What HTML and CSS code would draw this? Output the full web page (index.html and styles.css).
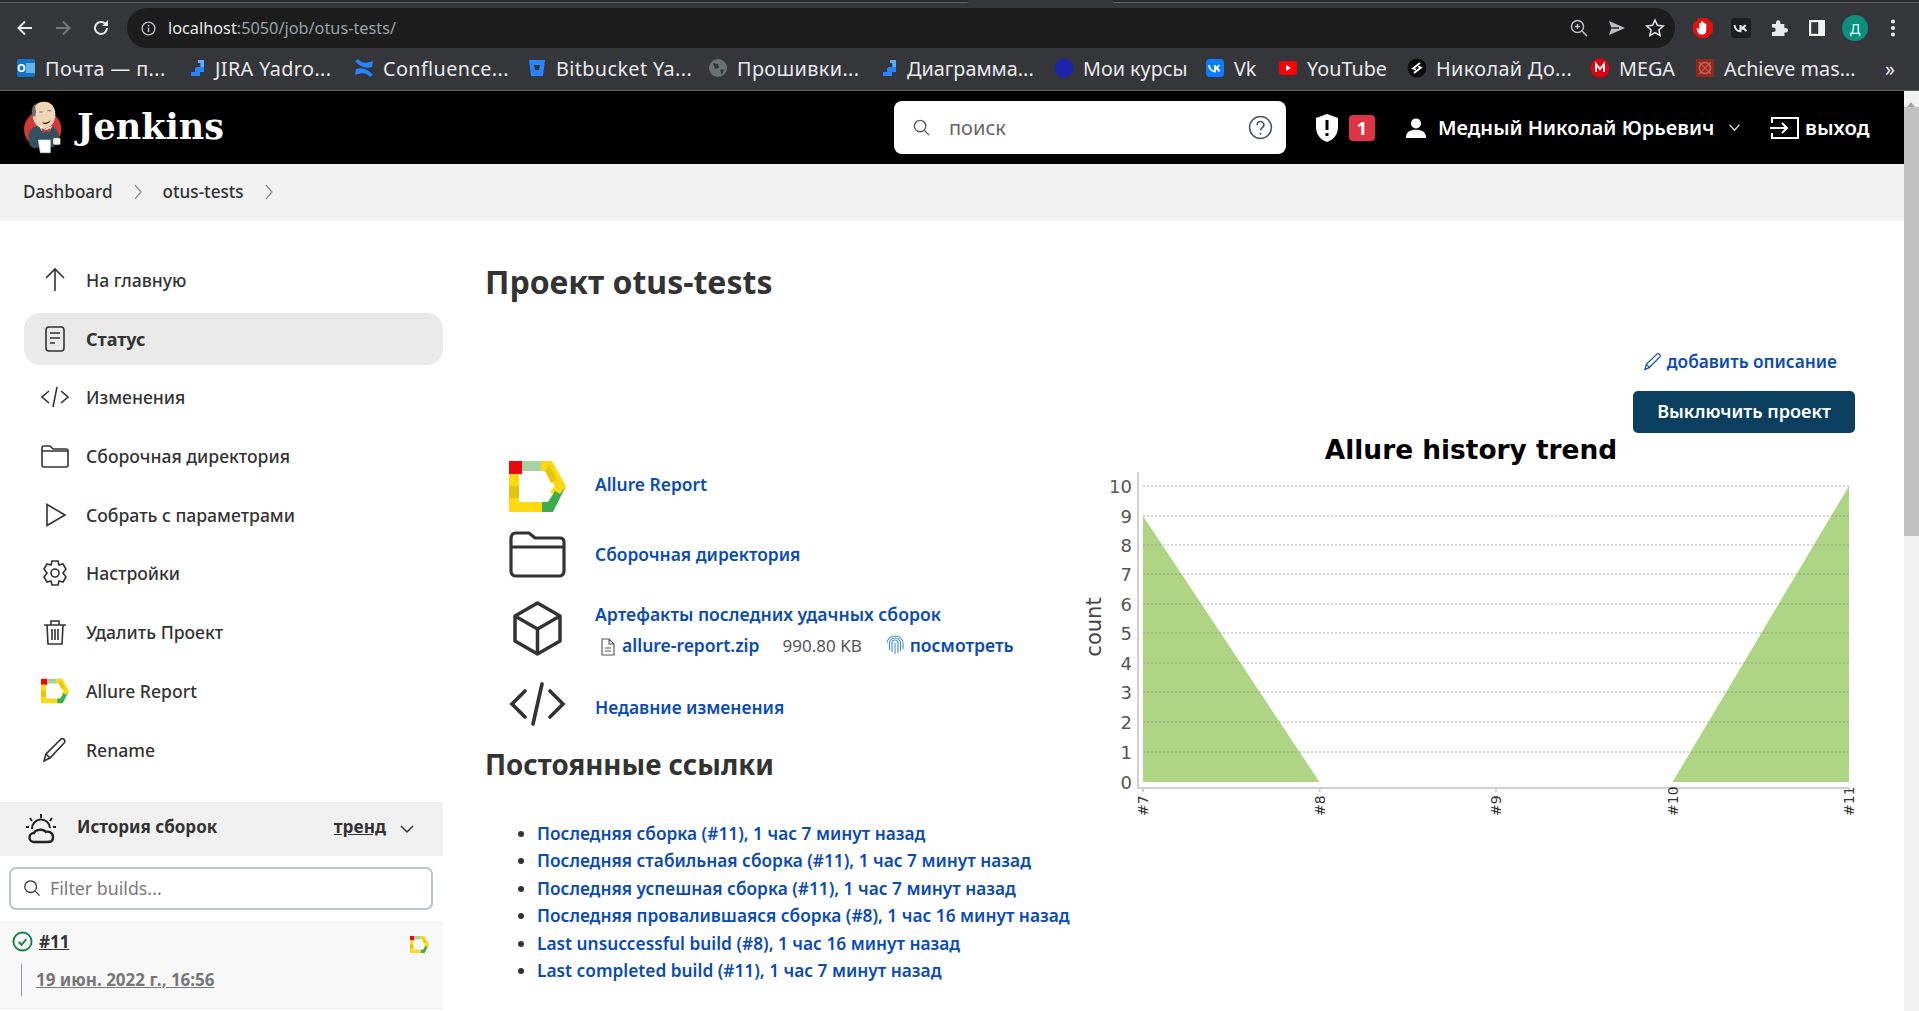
FILE: index.html
```html
<!DOCTYPE html>
<html lang="ru">
<head>
    <meta charset="UTF-8">
    <title>otus-tests [Jenkins]</title>
    <link rel="stylesheet" href="styles.css">
</head>
<body>
    <div class="tabstrip">
        <div class="tab-left"></div>
        <div class="tab-right"></div>
    </div>
    <div class="toolbar">
        <svg class="tb-icon nav-back" viewBox="0 0 20 20"><path d="M17 10H4M10 3.500 3.500 10l6.500 6.500" fill="none" stroke="#e8eaed" stroke-width="2"/></svg>
        <svg class="tb-icon nav-fwd" viewBox="0 0 20 20"><path d="M3 10h13M10 3.500l6.500 6.500-6.500 6.500" fill="none" stroke="#75777a" stroke-width="2"/></svg>
        <svg class="tb-icon nav-reload" viewBox="0 0 20 20"><path d="M16 10a6 6 0 1 1-1.800-4.300" fill="none" stroke="#e8eaed" stroke-width="2"/><path d="M17 2v6h-6z" fill="#e8eaed"/></svg>
        <div class="omnibox">
            <svg class="omni-info" viewBox="0 0 20 20"><circle cx="10" cy="10" r="7.500" fill="none" stroke="#bdc1c6" stroke-width="1.600"/><path d="M10 9v5M10 6v1.600" stroke="#bdc1c6" stroke-width="1.800"/></svg>
            <span class="url"><b>localhost</b>:5050/job/otus-tests/</span>
            <div class="omni-right">
                <svg class="tb-icon" viewBox="0 0 20 20"><circle cx="8.500" cy="8.500" r="6" fill="none" stroke="#bdc1c6" stroke-width="1.500"/><path d="M13 13l5 5M8.500 6v5M6 8.500h5" stroke="#bdc1c6" stroke-width="1.500"/></svg>
                <svg class="tb-icon" viewBox="0 0 20 20"><path d="M2 3l16 7-16 7 2.500-7z" fill="#bdc1c6"/><path d="M4.500 10H12" stroke="#1c1c1d" stroke-width="1.400"/></svg>
                <svg class="tb-icon" viewBox="0 0 20 20"><path d="M10 2l2.400 5.300 5.800.7-4.300 3.900 1.200 5.700L10 14.700l-5.100 2.900 1.200-5.700L1.800 8l5.800-.7z" fill="none" stroke="#e8eaed" stroke-width="1.500"/></svg>
            </div>
        </div>
        <div class="ext-icons">
            <svg class="tb-icon" viewBox="0 0 20 20"><path d="M6 0h8l6 6v8l-6 6H6l-6-6V6z" fill="#e60d0d"/><path d="M8 16.500c-1.500 0-2.500-1-3.300-2.800L3.500 10.500c.6-.6 1.500-.3 2 .5l.8 1.200V5.500a.9.9 0 0 1 1.700 0V4a.9.9 0 0 1 1.800 0v.8a.9.9 0 0 1 1.700 0v1.500a.9.9 0 0 1 1.800 0V12c0 3-1.500 4.500-3.800 4.500z" fill="#fff"/></svg>
            <svg class="tb-icon" viewBox="0 0 20 20"><rect width="20" height="20" rx="3" fill="#1d1e22"/><path d="M3.500 7c.5 4 2.500 6.200 6 6.200V7M9.500 10c2.500 0 4-1.200 5-3M9.500 10c2.500 0 4.500 1 6 3.200" fill="none" stroke="#e8eaed" stroke-width="2"/></svg>
            <svg class="tb-icon" viewBox="0 0 20 20"><path d="M3 6h4V4.500a2.200 2.200 0 0 1 4.400 0V6h4v4h1.400a2.200 2.200 0 0 1 0 4.400h-1.400V18H3v-4h1.500a2.200 2.200 0 0 0 0-4.400H3z" fill="#e8eaed"/></svg>
            <svg class="tb-icon" viewBox="0 0 20 20"><path d="M2 2h16v16H2z" fill="#f1f1f1"/><path d="M4.200 4.200h7v11.600h-7z" fill="#35363a"/></svg>
            <span class="avatar">Д</span>
            <svg class="tb-icon" viewBox="0 0 20 20"><circle cx="10" cy="3.500" r="2" fill="#e8eaed"/><circle cx="10" cy="10" r="2" fill="#e8eaed"/><circle cx="10" cy="16.500" r="2" fill="#e8eaed"/></svg>
        </div>
    </div>
    <div class="bookmarks">
        <span class="bm bm-cut"><svg viewBox="0 0 20 20"><rect x="1" y="1" width="18" height="18" rx="2" fill="#1173c9"/><rect x="10" y="5" width="9" height="10" fill="#5fb4ee"/><text x="5.500" y="14" class="bm-o">O</text></svg>Почта — п...</span>
        <span class="bm bm-cut"><svg viewBox="0 0 20 20"><path d="M9 10h5V5h4v9h-9zM5 14h5V9h4v9H5z" fill="#2684ff"/><path d="M12 2h6v7h-3V5h-3z" fill="#67a9ff"/></svg>JIRA Yadro...</span>
        <span class="bm bm-cut"><svg viewBox="0 0 20 20"><path d="M1 3l3-2c3 4 7 5 15 2l-1 6c-6 2-12 0-17-6zM19 17l-3 2c-3-4-7-5-15-2l1-6c6-2 12 0 17 6z" fill="#2684ff"/></svg>Confluence...</span>
        <span class="bm bm-cut"><svg viewBox="0 0 20 20"><path d="M2 2h16l-2 16H4z" fill="#2684ff"/><path d="M7 7h6l-1 5H8z" fill="#35363a"/></svg>Bitbucket Ya...</span>
        <span class="bm bm-cut"><svg viewBox="0 0 20 20"><circle cx="10" cy="10" r="9" fill="#6b7074"/><path d="M5 5l5 1 1 4-4 1zM12 12l4-1-2 6z" fill="#35363a"/></svg>Прошивки...</span>
        <span class="bm"><svg viewBox="0 0 20 20"><path d="M9 10h5V5h4v9h-9zM5 14h5V9h4v9H5z" fill="#2684ff"/><path d="M12 2h6v7h-3V5h-3z" fill="#67a9ff"/></svg>Диаграмма...</span>
        <span class="bm"><svg viewBox="0 0 20 20"><circle cx="10" cy="10" r="9.500" fill="#1d24ac"/></svg>Мои курсы</span>
        <span class="bm"><svg viewBox="0 0 20 20"><rect x="1" y="1" width="18" height="18" rx="4" fill="#0a7cff"/><path d="M4 7c.5 4 2.500 6.500 6 6.500V7M10 10c2 0 3.500-1.500 4-3M10 10c2 0 3.500 1.500 4.500 3.500" fill="none" stroke="#fff" stroke-width="1.800"/></svg>Vk</span>
        <span class="bm"><svg viewBox="0 0 20 20"><rect x="1" y="3" width="18" height="14" rx="4" fill="#f00"/><path d="M8 7l5 3-5 3z" fill="#fff"/></svg>YouTube</span>
        <span class="bm bm-cut"><svg viewBox="0 0 20 20"><circle cx="10" cy="10" r="9.500" fill="#0b0b0b"/><path d="M13 5 6 10.500l3 1M7 15l7-5.500-3-1" fill="none" stroke="#fff" stroke-width="1.800"/></svg>Николай До...</span>
        <span class="bm"><svg viewBox="0 0 20 20"><circle cx="10" cy="10" r="9.500" fill="#e3000f"/><path d="M6 14V6l4 5 4-5v8" fill="none" stroke="#fff" stroke-width="1.900"/></svg>MEGA</span>
        <span class="bm"><svg viewBox="0 0 20 20"><rect x="1" y="1" width="18" height="18" fill="#8c2a22"/><circle cx="10" cy="10" r="5.500" fill="none" stroke="#d1584b" stroke-width="1.800"/><path d="M4 4l12 12M16 4 4 16" stroke="#d1584b" stroke-width="1.200"/></svg>Achieve mas...</span>
        <span class="bm bm-more">»</span>
    </div>

    <div class="window">
        <div class="page">
            <header class="jk-header">
                <svg class="jk-logo" viewBox="60 30 135 165">
                    <circle cx="128" cy="118" r="56" fill="#d33833"/>
                    <path d="M85 140c0-18 12-30 30-32h35c18 4 28 20 28 42l-18 22-60 2c-10-4-15-16-15-34z" fill="#335061"/>
                    <path d="M98 72c0-24 14-37 34-37s34 14 34 38c0 26-14 42-34 42-18 0-34-16-34-43z" fill="#f0d6b7"/>
                    <path d="M96 78c-2-16 0-30 12-38-3 10-3 14 0 24l-2 16z" fill="#6d6b6d"/>
                    <path d="M118 66h10M142 62h12" stroke="#49728b" stroke-width="3"/>
                    <path d="M126 96c8 4 18 2 26-6-2 12-20 18-26 6z" fill="#4a2a22"/>
                    <path d="M118 108l18 8 20-8-6 14h-26z" fill="#fff"/>
                    <path d="M124 114l14 6 14-6-2 14-12-4-12 4z" fill="#d33833"/>
                    <path d="M115 150h36v38h-30z" fill="#fff" stroke="#d9d9d9" stroke-width="2"/>
                    <rect x="158" y="143" width="24" height="22" rx="6" fill="#f5f0e8" stroke="#333" stroke-width="2"/>
                </svg>
                <span class="jk-name">Jenkins</span>
                <div class="jk-search">
                    <svg class="jk-search-icon" viewBox="0 0 20 20"><circle cx="8.500" cy="8.500" r="6" fill="none" stroke="#555" stroke-width="1.400"/><path d="M13 13l5 5" stroke="#555" stroke-width="1.400"/></svg>
                    <span class="jk-search-text">поиск</span>
                    <svg class="jk-help" viewBox="0 0 24 24"><circle cx="12" cy="12" r="10.500" fill="none" stroke="#4a5568" stroke-width="1.500"/><path d="M8.800 9.500A3.200 3.200 0 1 1 13.500 12.300c-1 .6-1.500 1.200-1.500 2.400" fill="none" stroke="#4a5568" stroke-width="1.500"/><circle cx="12" cy="18" r="1" fill="#4a5568"/></svg>
                </div>
                <svg class="jk-shield" viewBox="0 0 24 30"><path d="M12 1l11 4v9c0 8-5 13-11 15C6 27 1 22 1 14V5z" fill="#fff"/><path d="M12 7v10M12 20v3" stroke="#000" stroke-width="3"/></svg>
                <span class="jk-badge">1</span>
                <svg class="jk-user" viewBox="0 0 24 24"><circle cx="12" cy="7" r="5.500" fill="#fff"/><path d="M1 23c0-7 5-9 11-9s11 2 11 9z" fill="#fff"/></svg>
                <span class="jk-username">Медный Николай Юрьевич</span>
                <svg class="jk-caret" viewBox="0 0 14 10"><path d="M1.500 2l5.500 6 5.500-6" fill="none" stroke="#ddd" stroke-width="1.500"/></svg>
                <svg class="jk-logout" viewBox="0 0 30 24"><path d="M3 7V2h26v20H3v-5" fill="none" stroke="#fff" stroke-width="2"/><path d="M1 12h17M13 7l5 5-5 5" fill="none" stroke="#fff" stroke-width="2"/></svg>
                <span class="jk-logout-text">выход</span>
            </header>
            <nav class="crumbs">
                <span class="crumb">Dashboard</span>
                <svg class="crumb-sep" viewBox="0 0 10 18"><path d="M2 2l6 7-6 7" fill="none" stroke="#888" stroke-width="1.200"/></svg>
                <span class="crumb">otus-tests</span>
                <svg class="crumb-sep" viewBox="0 0 10 18"><path d="M2 2l6 7-6 7" fill="none" stroke="#888" stroke-width="1.200"/></svg>
            </nav>

            <div class="layout">
                <aside class="sidebar">
                    <ul class="tasks">
                        <li class="task"><svg viewBox="0 0 28 28"><path d="M14 25V4M5 12l9-9 9 9" class="line"/></svg>На главную</li>
                        <li class="task task-active"><svg viewBox="0 0 28 28"><rect x="5" y="2" width="18" height="24" rx="3" class="line"/><path d="M9 8h10M9 13h10M9 18h5" class="line"/></svg>Статус</li>
                        <li class="task"><svg viewBox="0 0 28 28"><path d="M8 8l-7 6 7 6M20 8l7 6-7 6M16 4l-4 20" class="line"/></svg>Изменения</li>
                        <li class="task"><svg viewBox="0 0 28 28"><path d="M1 6c0-1 .5-2 2-2h6l3 3h13c1.500 0 2 1 2 2v14c0 1-.5 2-2 2H3c-1.500 0-2-1-2-2zM1 9h26" class="line"/></svg>Сборочная директория</li>
                        <li class="task"><svg viewBox="0 0 28 28"><path d="M6 3.500v21L24 14z" class="line"/></svg>Собрать с параметрами</li>
                        <li class="task"><svg viewBox="0 0 28 28"><path d="M11 2h6l1 4 4-1 3 5-3 4 3 4-3 5-4-1-1 4h-6l-1-4-4 1-3-5 3-4-3-4 3-5 4 1z" class="line"/><circle cx="14" cy="14" r="4" class="line"/></svg>Настройки</li>
                        <li class="task"><svg viewBox="0 0 28 28"><path d="M3 7h22M10 7V3h8v4M6 7l1 19h14l1-19M11 11v11M14 11v11M17 11v11" class="line"/></svg>Удалить Проект</li>
                        <li class="task"><svg class="allure-mark" viewBox="0 0 57 51"><use href="#allure"/></svg>Allure Report</li>
                        <li class="task"><svg viewBox="0 0 28 28"><path d="M3 25l2-7L20 3c2-1.500 5 1.500 3.500 3.500L9 22zM5 18l4 4" class="line"/></svg>Rename</li>
                    </ul>
                    <div class="history">
                        <div class="history-head">
                            <svg class="history-icon" viewBox="0 0 32 32"><path d="M7 16a9 9 0 0 1 18-1" fill="none" stroke="#222" stroke-width="2"/><path d="M9 29a4.500 4.500 0 0 1 0-9c1-3 9-5 12-1 2-1 7 0 7 5s-3 5-6 5z" fill="#f1f1f1" stroke="#222" stroke-width="2.400"/><path d="M16 1v4M5 5l2 3M27 5l-2 3M1 14h3M28 14h3" stroke="#222" stroke-width="2"/></svg>
                            <span class="history-title">История сборок</span>
                            <span class="history-trend">тренд</span>
                            <svg class="history-caret" viewBox="0 0 14 10"><path d="M1 2l6 6 6-6" fill="none" stroke="#333" stroke-width="1.500"/></svg>
                        </div>
                        <div class="filter-wrap">
                            <div class="filter">
                                <svg viewBox="0 0 20 20"><circle cx="8.500" cy="8.500" r="6.500" fill="none" stroke="#333" stroke-width="1.400"/><path d="M13.500 13.500l5 5" stroke="#333" stroke-width="1.400"/></svg>
                                <span>Filter builds...</span>
                            </div>
                        </div>
                        <div class="build">
                            <div class="build-top">
                                <svg class="build-ok" viewBox="0 0 22 22"><circle cx="11" cy="11" r="9.500" fill="none" stroke="#138347" stroke-width="2"/><path d="M7 11.500l3 3 5-6" fill="none" stroke="#138347" stroke-width="2"/></svg>
                                <a class="build-num">#11</a>
                                <svg class="build-allure" viewBox="0 0 57 51"><use href="#allure"/></svg>
                            </div>
                            <div class="build-date"><a>19 июн. 2022 г., 16:56</a></div>
                        </div>
                    </div>
                </aside>

                <main class="content">
                    <h1 class="job-title">Проект otus-tests</h1>
                    <div class="desc-row">
                        <svg viewBox="0 0 20 20"><path d="M2 18.500l1.500-5.500L15 2c1.500-1 4 1 3 3L6.500 16.500zM3.500 13l3.500 3.500" fill="none" stroke="#0b4bb5" stroke-width="1.300"/></svg>
                        <a class="link">добавить описание</a>
                    </div>
                    <div class="btn-row"><span class="btn-disable">Выключить проект</span></div>
                    <div class="job-body">
                        <div class="job-left">
                            <div class="job-link job-link-allure">
                                <svg class="job-icon" viewBox="0 0 57 51"><use href="#allure"/></svg>
                                <a class="link allure-text">Allure Report</a>
                            </div>
                            <div class="job-link job-link-ws">
                                <svg class="job-icon" viewBox="0 0 57 47"><path d="M2 8c0-4 2-6 5-6h13l6 5h25c3 0 4 2 4 4v29c0 3-2 5-5 5H7c-3 0-5-2-5-5zM2 16h53" fill="none" stroke="#333" stroke-width="3.200"/></svg>
                                <a class="link job-text">Сборочная директория</a>
                            </div>
                            <div class="job-link job-link-art">
                                <svg class="job-icon" viewBox="0 0 57 55"><path d="M28.500 2 51 15v25L28.500 53 6 40V15zM6 15l22.500 13L51 15M28.500 28v25" fill="none" stroke="#333" stroke-width="3.500" stroke-linejoin="round"/></svg>
                                <div class="art-text">
                                    <a class="link">Артефакты последних удачных сборок</a>
                                    <div class="art-file">
                                        <svg class="art-doc" viewBox="0 0 16 20"><path d="M2 2h7l5 5v11H2zM9 2v5h5M5 11h6M5 14h6" fill="none" stroke="#555" stroke-width="1.100"/></svg>
                                        <a class="link art-name">allure-report.zip</a>
                                        <span class="art-size">990.80 KB</span>
                                        <svg class="art-print" viewBox="0 0 18 20"><g fill="none" stroke="#3f8fd2" stroke-width="1.100"><path d="M1 8a8 7 0 0 1 16 0v6"/><path d="M3.500 15V8a5.500 5 0 0 1 11 0v8"/><path d="M6 17V8a3 3 0 0 1 6 0v10"/><path d="M9 8v11"/></g></svg>
                                        <a class="link art-view">посмотреть</a>
                                    </div>
                                </div>
                            </div>
                            <div class="job-link job-link-changes">
                                <svg class="job-icon" viewBox="0 0 57 44"><path d="M16 9 3 22l13 13M41 9l13 13-13 13M33 2l-9 40" fill="none" stroke="#333" stroke-width="3.600" stroke-linecap="round"/></svg>
                                <a class="link job-text changes-text">Недавние изменения</a>
                            </div>
                            <h2 class="perma-title">Постоянные ссылки</h2>
                            <ul class="perma">
                                <li><a class="link">Последняя сборка (#11), 1 час 7 минут назад</a></li>
                                <li><a class="link">Последняя стабильная сборка (#11), 1 час 7 минут назад</a></li>
                                <li><a class="link">Последняя успешная сборка (#11), 1 час 7 минут назад</a></li>
                                <li><a class="link">Последняя провалившаяся сборка (#8), 1 час 16 минут назад</a></li>
                                <li><a class="link">Last unsuccessful build (#8), 1 час 16 минут назад</a></li>
                                <li><a class="link">Last completed build (#11), 1 час 7 минут назад</a></li>
                            </ul>
                        </div>
                        <svg class="trend" viewBox="0 -6 800 426" width="800" height="426">
                            <text x="397" y="23" class="trend-title">Allure history trend</text>
                            <path d="M69 80 245.500 346H69z" class="trend-area"/>
                            <path d="M775 50 598.500 346H775z" class="trend-area"/>
                            <g class="trend-grid">
                                <path d="M69 50H775M69 80H775M69 109H775M69 138H775M69 168H775M69 197H775M69 227H775M69 256H775M69 286H775M69 316H775"/>
                            </g>
                            <path d="M64 36V352H775M69 352v4M245.500 352v4M422 352v4M598.500 352v4M775 352v4" class="trend-axis"/>
                            <g class="trend-y">
                                <text x="58" y="57">10</text><text x="58" y="87">9</text><text x="58" y="116">8</text><text x="58" y="145">7</text><text x="58" y="175">6</text><text x="58" y="204">5</text><text x="58" y="234">4</text><text x="58" y="263">3</text><text x="58" y="293">2</text><text x="58" y="323">1</text><text x="58" y="353">0</text>
                            </g>
                            <text class="trend-count" transform="translate(27 191) rotate(-90)">count</text>
                            <g class="trend-x">
                                <text transform="translate(74 380) rotate(-90)">#7</text>
                                <text transform="translate(251 380) rotate(-90)">#8</text>
                                <text transform="translate(427 380) rotate(-90)">#9</text>
                                <text transform="translate(604 380) rotate(-90)">#10</text>
                                <text transform="translate(780 380) rotate(-90)">#11</text>
                            </g>
                        </svg>
                    </div>
                </main>
            </div>
        </div>
        <div class="scrollbar">
            <div class="scroll-arrow"></div>
            <div class="scroll-thumb"></div>
        </div>
    </div>

    <svg class="defs" width="0" height="0">
        <symbol id="allure" viewBox="0 0 57 51">
            <path d="M0 0h13v13H0z" fill="#e8090f"/>
            <path d="M13 0h19v10H13z" fill="#a8d2a0"/>
            <path d="M32 0h11l14 25-6 11-10-5 5-6-10-15H32z" fill="#ffd90f"/>
            <path d="M40 3l8 15-6 4-6-12z" fill="#e6c60f"/>
            <path d="M0 13h10v38H0z" fill="#ffd90f"/>
            <path d="M0 25h10v12H0z" fill="#e3c50f"/>
            <path d="M10 41h23v10H10z" fill="#ffd90f"/>
            <path d="M33 41h6l7-11 5 3 6-8-13 26H33z" fill="#3cad4a"/>
        </symbol>
    </svg>
</body>
</html>
```

FILE: styles.css
```css
* {
    box-sizing: border-box;
}
html, body {
    height: 100%;
}
body {
    margin: 0;
    overflow: hidden;
    background: #fff;
    font-family: "Noto Sans", Arial, sans-serif;
    font-size: 17.600px;
    color: #333;
    display: flex;
    flex-direction: column;
}
ul {
    list-style: none;
    margin: 0;
    padding: 0;
}
.defs {
    display: none;
}

/* browser chrome */
.tabstrip {
    height: 3px;
    background: #35363a;
    display: flex;
    justify-content: space-between;
    flex: none;
}
.tab-left,
.tab-right {
    height: 3px;
    background: #28292b;
    border-bottom: 1px solid #5f6063;
}
.tab-left {
    width: 969px;
    border-bottom-right-radius: 3px;
}
.tab-right {
    width: 807px;
    border-bottom-left-radius: 3px;
}
.toolbar {
    height: 45px;
    padding-top: 5px;
    background: #35363a;
    display: flex;
    align-items: center;
    flex: none;
}
.tb-icon {
    width: 20px;
    height: 20px;
    flex: none;
}
.nav-back {
    margin-left: 15px;
}
.nav-fwd,
.nav-reload {
    margin-left: 18px;
}
.omnibox {
    margin-left: 16px;
    width: 1548px;
    height: 40px;
    border-radius: 20px;
    background: #1c1c1d;
    display: flex;
    align-items: center;
    padding-left: 13px;
    padding-right: 10px;
}
.omni-info {
    width: 17px;
    height: 17px;
}
.url {
    margin-left: 11px;
    font-size: 16.300px;
    color: #9aa0a6;
}
.url b {
    font-weight: 400;
    color: #e8eaed;
}
.omni-right {
    margin-left: auto;
    display: flex;
    gap: 18px;
}
.ext-icons {
    margin-left: 18px;
    display: flex;
    align-items: center;
    gap: 18px;
}
.avatar {
    width: 26px;
    height: 26px;
    margin: 0 -3px;
    border-radius: 50%;
    background: #0d8f7f;
    color: #dff;
    font-size: 14px;
    display: flex;
    align-items: center;
    justify-content: center;
}
.bookmarks {
    height: 43px;
    padding: 0 0 2px 16px;
    background: #35363a;
    border-bottom: 1px solid #5f6063;
    flex: none;
    display: grid;
    grid-template-columns: 170px 168px 173px 181px 170px 176px 151px 73px 129px 183px 105px 190px 20px;
    align-items: center;
}
.bm {
    display: flex;
    align-items: center;
    gap: 9px;
    color: #e8eaed;
    font-size: 19.800px;
    white-space: nowrap;
}
.bm-cut {
    letter-spacing: .4px;
}
.bm svg {
    width: 20px;
    height: 20px;
    flex: none;
}
.bm-o {
    font: bold 11px "Noto Sans", sans-serif;
    fill: #fff;
    text-anchor: middle;
}

/* page */
.window {
    flex: 1;
    display: flex;
    min-height: 0;
}
.page {
    flex: 1;
    min-width: 0;
    overflow: hidden;
}
.scrollbar {
    width: 15px;
    background: #f1f1f1;
    flex: none;
}
.scroll-arrow {
    width: 0;
    height: 0;
    margin-left: 3px;
    padding-bottom: 5px;
    border-left: 4px solid transparent;
    border-right: 4px solid transparent;
    border-bottom: 5px solid #a3a3a3;
    border-top: 6px solid transparent;
    box-sizing: content-box;
}
.scroll-thumb {
    height: 429px;
    background: #c1c1c1;
}

.jk-header {
    height: 73px;
    background: #000;
    display: flex;
    align-items: center;
    color: #fff;
}
.jk-logo {
    width: 45px;
    height: 55px;
    margin-left: 20px;
}
.jk-name {
    margin-left: 12px;
    padding-bottom: 3px;
    font: bold 35px "DejaVu Serif", serif;
    width: 153px;
}
.jk-search {
    margin-left: 664px;
    width: 392px;
    height: 53px;
    background: #fff;
    border-radius: 8px;
    display: flex;
    align-items: center;
    padding: 0 13px 0 18px;
}
.jk-search-icon {
    width: 19px;
    height: 19px;
}
.jk-search-text {
    margin-left: 18px;
    color: #666;
    font-size: 20px;
}
.jk-help {
    margin-left: auto;
    width: 25px;
    height: 25px;
}
.jk-shield {
    margin-left: 29px;
    width: 24px;
    height: 30px;
}
.jk-badge {
    margin-left: 10px;
    width: 26px;
    height: 26px;
    border-radius: 4px;
    background: #dc3545;
    font-weight: 700;
    font-size: 18px;
    display: flex;
    align-items: center;
    justify-content: center;
}
.jk-user {
    margin-left: 30px;
    width: 22px;
    height: 24px;
}
.jk-username {
    margin-left: 11px;
    width: 277px;
    font-size: 20px;
    font-weight: 600;
    white-space: nowrap;
}
.jk-caret {
    margin-left: 13px;
    width: 13px;
    height: 9px;
}
.jk-logout {
    margin-left: 28px;
    width: 30px;
    height: 24px;
}
.jk-logout-text {
    margin-left: 6px;
    padding-bottom: 2px;
    font-size: 20.400px;
    font-weight: 600;
}
.crumbs {
    height: 57px;
    padding: 0 0 2px 23px;
    background: #f2f2f2;
    display: flex;
    align-items: center;
    font-size: 17.100px;
    font-weight: 500;
    color: #333;
}
.crumb-sep {
    width: 10px;
    height: 18px;
    margin: 0 20px;
}

.layout {
    display: flex;
}
.sidebar {
    width: 443px;
    flex: none;
    padding-top: 33px;
}
.tasks {
    padding-left: 24px;
    display: flex;
    flex-direction: column;
    gap: 6.700px;
}
.task {
    height: 52px;
    border-radius: 16px;
    display: flex;
    align-items: center;
    padding-left: 17px;
    gap: 17px;
    font-size: 17.600px;
    font-weight: 500;
    color: #333;
}
.task svg {
    width: 28px;
    height: 28px;
    flex: none;
}
.task-active {
    background: #eaeaea;
    font-weight: 700;
    font-size: 18px;
}
.line {
    fill: none;
    stroke: #333;
    stroke-width: 1.600;
}
.history {
    margin-top: 26px;
}
.history-head {
    height: 54px;
    padding: 0 0 4px 25px;
    background: #f1f1f1;
    display: flex;
    align-items: center;
    font-size: 17px;
}
.history-icon {
    width: 32px;
    height: 32px;
    margin-top: 4px;
}
.history-title {
    margin-left: 20px;
    font-weight: 700;
}
.history-trend {
    margin-left: auto;
    font-size: 17.300px;
    font-weight: 700;
    text-decoration: underline;
}
.history-caret {
    margin: 5px 29px 0 14px;
    width: 14px;
    height: 10px;
}
.filter-wrap {
    padding: 11px 10px 12px 9px;
    border-bottom: 1px solid #eee;
}
.filter {
    height: 43px;
    border: 2px solid #b8c4cf;
    border-radius: 7px;
    display: flex;
    align-items: center;
    padding-left: 12px;
    gap: 9px;
    color: #7a7a7a;
    font-size: 17.800px;
}
.filter svg {
    width: 18px;
    height: 18px;
}
.build {
    height: 86px;
    background: #f8f8f8;
    border-bottom: 1px solid #eee;
    padding: 7px 14px 0 12px;
}
.build-top {
    display: flex;
    align-items: center;
    height: 24px;
}
.build-ok {
    width: 21px;
    height: 21px;
}
.build-num {
    margin-left: 6px;
    font-weight: 700;
    font-size: 17px;
    text-decoration: underline;
}
.build-allure {
    margin-left: auto;
    margin-top: 6px;
    width: 19px;
    height: 17px;
}
.build-date {
    margin: 10px 0 0 9px;
    border-left: 1px solid #99a;
    padding: 6px 0 6px 14px;
    height: 32px;
    line-height: 20px;
    color: #777;
    font-weight: 700;
    font-size: 17px;
    text-decoration: underline;
}

.content {
    flex: 1;
    min-width: 0;
    padding: 40px 49px 0 43px;
}
.job-title {
    margin: 0 0 0 -1px;
    height: 42px;
    line-height: 42px;
    font-size: 32px;
    font-weight: 700;
    color: #333;
}
.link {
    color: #0b4bb5;
    font-weight: 600;
    white-space: nowrap;
}
.desc-row {
    margin-top: 46px;
    margin-right: 18px;
    height: 24px;
    font-size: 17.300px;
    display: flex;
    align-items: center;
    justify-content: flex-end;
    gap: 5px;
}
.desc-row svg {
    width: 19px;
    height: 19px;
}
.btn-row {
    margin-top: 18px;
    display: flex;
    justify-content: flex-end;
}
.btn-disable {
    width: 222px;
    height: 42px;
    padding-bottom: 2px;
    border-radius: 5px;
    background: #0b3f60;
    color: #fff;
    font-weight: 600;
    font-size: 18.100px;
    display: flex;
    align-items: center;
    justify-content: center;
}
.job-body {
    margin-top: 4px;
    display: flex;
    justify-content: space-between;
}
.job-left {
    width: 585px;
    flex: none;
}
.job-link {
    display: flex;
    align-items: center;
    gap: 29px;
    padding-left: 23px;
}
.job-icon {
    width: 57px;
    flex: none;
}
.job-text,
.allure-text {
    font-size: 17.400px;
}
.job-link-allure {
    margin-top: 24px;
    height: 51px;
}
.allure-text {
    padding-bottom: 5px;
}
.job-link-ws {
    margin-top: 18.500px;
    height: 47px;
}
.job-link-art {
    margin-top: 24px;
    height: 54px;
}
.art-text {
    padding-top: 2.500px;
}
.job-link-changes {
    margin-top: 26.500px;
    height: 43px;
}
.changes-text {
    padding-top: 7px;
}
.art-file {
    display: flex;
    align-items: center;
    margin-top: 7px;
    margin-left: 5px;
}
.art-doc {
    width: 16px;
    height: 20px;
    margin-top: 4px;
}
.art-name {
    margin-left: 6px;
    font-size: 17.500px;
}
.art-size {
    margin-left: 23px;
    color: #555;
    font-size: 17px;
}
.art-print {
    margin-left: 24px;
    width: 18px;
    height: 20px;
}
.art-view {
    margin-left: 6px;
}
.perma-title {
    margin: 19px 0 0 -1px;
    height: 40px;
    line-height: 40px;
    font-size: 27.700px;
    font-weight: 700;
    color: #333;
}
.perma {
    margin-top: 36px;
    padding-left: 51px;
    list-style: disc;
    font-size: 17.300px;
}
.perma li {
    height: 27.400px;
    line-height: 27.400px;
}

/* chart */
.trend {
    flex: none;
    margin: -7.500px -19px 0 0;
}
.trend text {
    font-family: "DejaVu Sans", sans-serif;
}
.trend-title {
    font-size: 26.400px;
    font-weight: 700;
    fill: #000;
    text-anchor: middle;
}
.trend-grid path {
    fill: none;
    stroke: #8a8a8a;
    stroke-opacity: .7;
    stroke-width: 1;
    stroke-dasharray: 2 2;
}
.trend-area {
    fill: #add583;
}
.trend-axis {
    fill: none;
    stroke: #d0d0d0;
    stroke-width: 2;
}
.trend-y text {
    font-size: 18px;
    fill: #555;
    text-anchor: end;
}
.trend-count {
    font-size: 21px;
    fill: #444;
    text-anchor: middle;
}
.trend-x text {
    font-size: 14px;
    fill: #333;
}
```
